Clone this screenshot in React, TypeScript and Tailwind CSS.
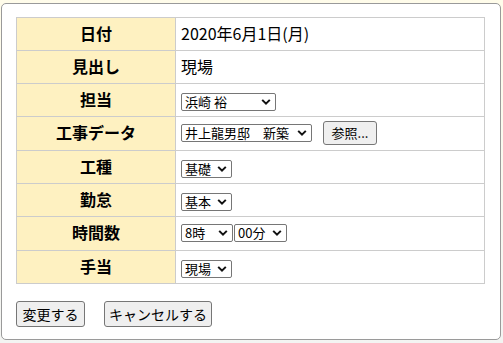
import React from 'react';

const font = { fontFamily: '"Noto Sans CJK JP", "Noto Sans", sans-serif' };

const Chevron = () => (
	<svg
		width="10"
		height="7"
		viewBox="0 0 10 7"
		className="pointer-events-none absolute right-[5px] top-1/2 -translate-y-1/2"
	>
		<path d="M1.2 1.4 L5 5.2 L8.8 1.4" fill="none" stroke="#111" strokeWidth="2" />
	</svg>
);

type SelectProps = {
	options: string[];
	value: string;
	width: string;
};

const Select = ({ options, value, width }: SelectProps) => (
	<span className={`relative inline-block align-middle ${width}`}>
		<select
			defaultValue={value}
			className="block h-[18px] w-full appearance-none rounded-[2px] border border-[#767676] bg-white pl-[3px] pr-[16px] text-[13px] leading-[16px] text-black outline-none"
		>
			{options.map((o) => (
				<option key={o}>{o}</option>
			))}
		</select>
		<Chevron />
	</span>
);

const rows: { label: string; h: string; cell: React.ReactNode }[] = [
	{ label: '日付', h: 'h-[33px]', cell: <span className="text-[16px] leading-[20px]">2020年6月1日(月)</span> },
	{ label: '見出し', h: 'h-[33px]', cell: <span className="text-[16px] leading-[20px]">現場</span> },
	{
		label: '担当',
		h: 'h-[33px]',
		cell: <Select options={['浜崎 裕', '井上 龍男']} value="浜崎 裕" width="w-[95px]" />,
	},
	{
		label: '工事データ',
		h: 'h-[34px]',
		cell: (
			<div className="flex items-center gap-[11px]">
				<Select options={['井上龍男邸　新築']} value="井上龍男邸　新築" width="w-[131px]" />
				<button className="h-[24px] w-[54px] rounded-[3px] border border-[#767676] bg-[#efefef] text-[13px] leading-[16px] text-black">
					参照...
				</button>
			</div>
		),
	},
	{
		label: '工種',
		h: 'h-[33px]',
		cell: <Select options={['基礎', '内装']} value="基礎" width="w-[51px]" />,
	},
	{
		label: '勤怠',
		h: 'h-[33px]',
		cell: <Select options={['基本', '残業']} value="基本" width="w-[51px]" />,
	},
	{
		label: '時間数',
		h: 'h-[34px]',
		cell: (
			<div className="flex items-center gap-[1px]">
				<Select options={['8時', '9時']} value="8時" width="w-[52px]" />
				<Select options={['00分', '30分']} value="00分" width="w-[53px]" />
			</div>
		),
	},
	{
		label: '手当',
		h: 'h-[33px]',
		cell: <Select options={['現場', '事務']} value="現場" width="w-[51px]" />,
	},
];

export default function App() {
	return (
		<div
			className="h-[343px] w-[503px] bg-gradient-to-b from-[#fffcea] to-[#f3f4f2] pl-[1px] pt-[3px]"
			style={font}
		>
			<div className="h-[337px] w-[500px] rounded-[5px] border border-[#9a9a9a] bg-white pl-[14px] pt-[13px]">
				<table className="w-[469px] border-collapse text-black">
					<tbody>
						{rows.map((r) => (
							<tr key={r.label} className={r.h}>
								<th className="w-[159px] border border-[#cccccc] bg-[#fef1c1] px-0 pt-0 pb-[3px] text-center text-[16px] leading-[20px] font-bold">
									{r.label}
								</th>
								<td className="border border-[#cccccc] pt-0 pb-[2px] pl-[5px] align-middle">{r.cell}</td>
							</tr>
						))}
					</tbody>
				</table>
				<div className="mt-[17px] flex gap-[19px]">
					<button className="h-[26px] w-[69px] rounded-[3px] border border-[#767676] bg-[#efefef] text-[14px] leading-[18px] text-black">
						変更する
					</button>
					<button className="h-[26px] w-[108px] rounded-[3px] border border-[#767676] bg-[#efefef] text-[14px] leading-[18px] text-black">
						キャンセルする
					</button>
				</div>
			</div>
		</div>
	);
}
